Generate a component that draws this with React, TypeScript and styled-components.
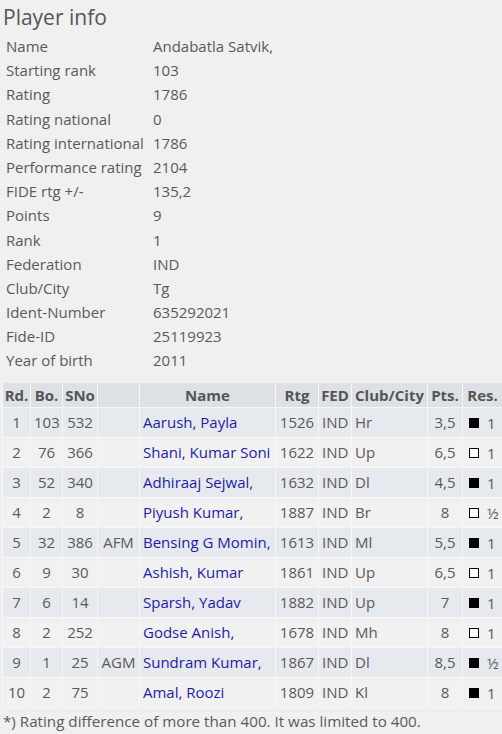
import React from "react";
import styled, { createGlobalStyle } from "styled-components";

const Global = createGlobalStyle`
  html, body { margin: 0; padding: 0; background: #f0f0f0; }
  body { font-family: "Open Sans", "Noto Sans", sans-serif; color: #5a5a5a; }
`;

const Page = styled.div`
  width: 502px;
  height: 734px;
  overflow: hidden;
  background: #f0f0f0;
`;

const Title = styled.h2`
  margin: 0;
  padding-left: 3px;
  height: 34px;
  line-height: 34px;
  font-size: 21px;
  font-weight: 400;
  color: #555;
`;

const InfoGrid = styled.div`
  display: grid;
  grid-template-columns: 147px auto;
  grid-auto-rows: 24.2px;
  padding-left: 6px;
  font-size: 15px;
  line-height: 24.2px;
  align-items: center;
`;

const InfoLabel = styled.div`
  color: #5a5a5a;
  white-space: nowrap;
`;

const InfoValue = styled.div`
  color: #5a5a5a;
  white-space: nowrap;
`;

const Table = styled.table`
  margin: 10px 0 0 2px;
  width: 500px;
  table-layout: fixed;
  border-collapse: collapse;
  font-size: 15px;
`;

const HeadCell = styled.th<{ $align?: string }>`
  height: 24px;
  padding: 0 1px;
  background: #dde1e6;
  border: 1px solid #f6f6f6;
  border-top: none;
  font-weight: 700;
  color: #555;
  text-align: ${(p) => p.$align || "center"};
  white-space: nowrap;
  overflow: hidden;
`;

const Row = styled.tr<{ $odd: boolean }>`
  background: ${(p) => (p.$odd ? "#e6e9ed" : "#f1f1f1")};
`;

const Cell = styled.td<{ $align?: string; $pl?: number }>`
  height: 29px;
  padding: 0 3px 0 ${(p) => (p.$pl ?? 3)}px;
  border: 1px solid #f7f7f7;
  color: #5a5a5a;
  text-align: ${(p) => p.$align || "center"};
  white-space: nowrap;
  overflow: hidden;
`;

const NameLink = styled.span`
  color: #1c1ca8;
`;

const ResWrap = styled.span`
  display: inline-flex;
  align-items: center;
  gap: 8px;
`;

const ColorBox = styled.span<{ $black: boolean }>`
  display: inline-block;
  width: 10px;
  height: 10px;
  box-sizing: border-box;
  border: 1px solid #000;
  background: ${(p) => (p.$black ? "#000" : "#fff")};
`;

const Footnote = styled.div`
  padding-left: 3px;
  font-size: 15.2px;
  line-height: 26px;
  color: #5a5a5a;
`;

const info: [string, string][] = [
  ["Name", "Andabatla Satvik,"],
  ["Starting rank", "103"],
  ["Rating", "1786"],
  ["Rating national", "0"],
  ["Rating international", "1786"],
  ["Performance rating", "2104"],
  ["FIDE rtg +/-", "135,2"],
  ["Points", "9"],
  ["Rank", "1"],
  ["Federation", "IND"],
  ["Club/City", "Tg"],
  ["Ident-Number", "635292021"],
  ["Fide-ID", "25119923"],
  ["Year of birth", "2011"],
];

type Game = {
  rd: number;
  bo: number;
  sno: number;
  title: string;
  name: string;
  rtg: number;
  fed: string;
  club: string;
  pts: string;
  black: boolean;
  res: string;
};

const games: Game[] = [
  { rd: 1, bo: 103, sno: 532, title: "", name: "Aarush, Payla", rtg: 1526, fed: "IND", club: "Hr", pts: "3,5", black: true, res: "1" },
  { rd: 2, bo: 76, sno: 366, title: "", name: "Shani, Kumar Soni", rtg: 1622, fed: "IND", club: "Up", pts: "6,5", black: false, res: "1" },
  { rd: 3, bo: 52, sno: 340, title: "", name: "Adhiraaj Sejwal,", rtg: 1632, fed: "IND", club: "Dl", pts: "4,5", black: true, res: "1" },
  { rd: 4, bo: 2, sno: 8, title: "", name: "Piyush Kumar,", rtg: 1887, fed: "IND", club: "Br", pts: "8", black: false, res: "½" },
  { rd: 5, bo: 32, sno: 386, title: "AFM", name: "Bensing G Momin,", rtg: 1613, fed: "IND", club: "Ml", pts: "5,5", black: true, res: "1" },
  { rd: 6, bo: 9, sno: 30, title: "", name: "Ashish, Kumar", rtg: 1861, fed: "IND", club: "Up", pts: "6,5", black: false, res: "1" },
  { rd: 7, bo: 6, sno: 14, title: "", name: "Sparsh, Yadav", rtg: 1882, fed: "IND", club: "Up", pts: "7", black: true, res: "1" },
  { rd: 8, bo: 2, sno: 252, title: "", name: "Godse Anish,", rtg: 1678, fed: "IND", club: "Mh", pts: "8", black: false, res: "1" },
  { rd: 9, bo: 1, sno: 25, title: "AGM", name: "Sundram Kumar,", rtg: 1867, fed: "IND", club: "Dl", pts: "8,5", black: true, res: "½" },
  { rd: 10, bo: 2, sno: 75, title: "", name: "Amal, Roozi", rtg: 1809, fed: "IND", club: "Kl", pts: "8", black: true, res: "1" },
];

const widths = [28, 32, 35, 42, 136, 43, 33, 76, 35, 40];

export default function App() {
  return (
    <Page>
      <Global />
      <Title>Player info</Title>
      <InfoGrid>
        {info.map(([k, v]) => (
          <React.Fragment key={k}>
            <InfoLabel>{k}</InfoLabel>
            <InfoValue>{v}</InfoValue>
          </React.Fragment>
        ))}
      </InfoGrid>
      <Table>
        <colgroup>
          {widths.map((w, i) => (
            <col key={i} style={{ width: w }} />
          ))}
        </colgroup>
        <thead>
          <tr>
            <HeadCell>Rd.</HeadCell>
            <HeadCell>Bo.</HeadCell>
            <HeadCell>SNo</HeadCell>
            <HeadCell></HeadCell>
            <HeadCell>Name</HeadCell>
            <HeadCell>Rtg</HeadCell>
            <HeadCell>FED</HeadCell>
            <HeadCell>Club/City</HeadCell>
            <HeadCell>Pts.</HeadCell>
            <HeadCell>Res.</HeadCell>
          </tr>
        </thead>
        <tbody>
          {games.map((g, i) => (
            <Row key={g.rd} $odd={i % 2 === 0}>
              <Cell>{g.rd}</Cell>
              <Cell>{g.bo}</Cell>
              <Cell>{g.sno}</Cell>
              <Cell>{g.title}</Cell>
              <Cell $align="left">
                <NameLink>{g.name}</NameLink>
              </Cell>
              <Cell>{g.rtg}</Cell>
              <Cell>{g.fed}</Cell>
              <Cell $align="left">{g.club}</Cell>
              <Cell>{g.pts}</Cell>
              <Cell $align="left" $pl={6}>
                <ResWrap>
                  <ColorBox $black={g.black} />
                  {g.res}
                </ResWrap>
              </Cell>
            </Row>
          ))}
        </tbody>
      </Table>
      <Footnote>*) Rating difference of more than 400. It was limited to 400.</Footnote>
    </Page>
  );
}
